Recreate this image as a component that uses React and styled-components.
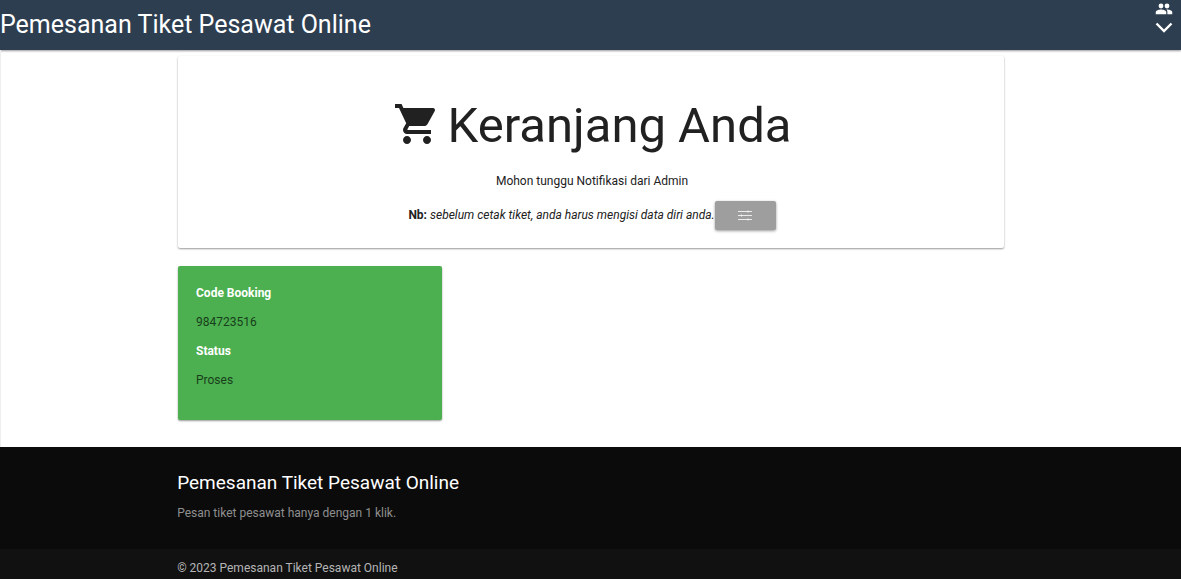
import React from "react";
import styled, { createGlobalStyle } from "styled-components";
import { MdShoppingCart } from "react-icons/md";

const GlobalStyle = createGlobalStyle`
  *, *::before, *::after { box-sizing: border-box; }
  body {
    margin: 0;
    background: #fff;
    color: #212121;
    font-family: Roboto, "Liberation Sans", sans-serif;
    font-size: 12px;
    line-height: 18px;
  }
`;

const Nav = styled.nav`
  display: flex;
  justify-content: space-between;
  align-items: flex-start;
  height: 50px;
  padding-right: 8px;
  background: #2d3e50;
  color: #fff;
  box-shadow: 0 1px 2px rgba(0, 0, 0, 0.4);
`;

const Brand = styled.a`
  color: inherit;
  font-size: 25px;
  line-height: 50px;
  text-decoration: none;
  white-space: nowrap;
`;

const AccountButton = styled.button`
  display: flex;
  flex-direction: column;
  align-items: center;
  gap: 4px;
  padding: 0;
  border: 0;
  background: none;
  color: inherit;
  cursor: pointer;
`;

const Container = styled.div`
  width: 70%;
  min-width: 300px;
  margin: 0 auto;
`;

const Main = styled.main`
  padding: 6px 0 27px;
  border-left: 1px solid #eee;
`;

const Panel = styled.section`
  border-radius: 2px;
  box-shadow: 0 1px 2px rgba(0, 0, 0, 0.4);
`;

const CartPanel = styled(Panel)`
  display: flex;
  flex-direction: column;
  align-items: center;
  padding: 40px 18px 18px 20px;
  margin-bottom: 18px;
`;

const Title = styled.h1`
  display: flex;
  align-items: center;
  gap: 7px;
  margin: 0 0 16px;
  font-size: 49px;
  font-weight: 400;
  line-height: 60px;
`;

const CartIcon = styled(MdShoppingCart)`
  width: 48px;
  height: 48px;
  margin-bottom: 5px;
`;

const Text = styled.p`
  margin: 0 0 11px;
`;

const Note = styled.div`
  display: flex;
  align-items: center;
`;

const NoteText = styled.p`
  margin: 0;
  padding-bottom: 2px;
`;

const FillButton = styled.button`
  display: flex;
  align-items: center;
  justify-content: center;
  width: 61px;
  height: 29px;
  padding: 0;
  border: 0;
  border-radius: 2px;
  background: #9e9e9e;
  color: #fff;
  box-shadow: 0 1px 3px rgba(0, 0, 0, 0.4);
  cursor: pointer;
`;

const BookingCard = styled(Panel)`
  width: 32%;
  min-width: 200px;
  padding: 18px 18px 20px;
  background: #4caf50;
`;

const Details = styled.dl`
  margin: 0;
`;

const Label = styled.dt`
  margin-bottom: 11px;
  color: #fff;
  font-weight: 700;
`;

const Value = styled.dd`
  margin: 0 0 11px;
  color: #17401a;
`;

const Footer = styled.footer`
  background: #0b0b0b;
`;

const FooterBody = styled.div`
  padding: 24px 0 27px;
`;

const FooterTitle = styled.h2`
  margin: 0 0 9px;
  color: #fff;
  font-size: 19px;
  font-weight: 400;
  line-height: 24px;
`;

const FooterText = styled.p`
  margin: 0;
  color: #8f8f8f;
`;

const Copyright = styled.div`
  padding: 10px 0 2px;
  background: #111;
  color: #b5b5b5;
`;

function PeopleIcon() {
  return (
    <svg width="18" height="18" viewBox="0 0 24 24" fill="currentColor" aria-hidden="true">
      <circle cx="8" cy="8" r="3.2" />
      <circle cx="16" cy="8" r="3.2" />
      <path d="M8 12.500c-2.330 0-7 1.170-7 3.500V19h14v-3c0-2.330-4.670-3.500-7-3.500z" />
      <path d="M16 12.500c-.29 0-.62.02-.97.050 1.160.840 1.470 1.970 1.470 3.450V19H23v-3c0-2.330-4.670-3.500-7-3.500z" />
    </svg>
  );
}

function ChevronIcon() {
  return (
    <svg width="18" height="12" viewBox="0 0 18 12" fill="none" stroke="currentColor" strokeWidth="2.4" aria-hidden="true">
      <path d="M1.500 1.500 9 9 16.500 1.500" />
    </svg>
  );
}

function AdjustIcon() {
  return (
    <svg width="14" height="12" viewBox="0 0 14 12" fill="none" stroke="currentColor" strokeWidth="0.8" aria-hidden="true">
      <path d="M0 1.500h14M0 5.500h14M0 9.500h14M10 0.500v2M3.500 4.500v2M10 8.500v2" />
    </svg>
  );
}

export default function App() {
  return (
    <>
      <GlobalStyle />
      <Nav>
        <Brand href="#">Pemesanan Tiket Pesawat Online</Brand>
        <AccountButton type="button" aria-label="Akun">
          <PeopleIcon />
          <ChevronIcon />
        </AccountButton>
      </Nav>
      <Main>
        <Container>
          <CartPanel>
            <Title>
              <CartIcon aria-hidden="true" />
              Keranjang Anda
            </Title>
            <Text>Mohon tunggu Notifikasi dari Admin</Text>
            <Note>
              <NoteText>
                <b>Nb:</b> <i>sebelum cetak tiket, anda harus mengisi data diri anda.</i>
              </NoteText>
              <FillButton type="button" aria-label="Isi data diri">
                <AdjustIcon />
              </FillButton>
            </Note>
          </CartPanel>
          <BookingCard>
            <Details>
              <Label>Code Booking</Label>
              <Value>984723516</Value>
              <Label>Status</Label>
              <Value>Proses</Value>
            </Details>
          </BookingCard>
        </Container>
      </Main>
      <Footer>
        <Container>
          <FooterBody>
            <FooterTitle>Pemesanan Tiket Pesawat Online</FooterTitle>
            <FooterText>Pesan tiket pesawat hanya dengan 1 klik.</FooterText>
          </FooterBody>
        </Container>
        <Copyright>
          <Container>© 2023 Pemesanan Tiket Pesawat Online</Container>
        </Copyright>
      </Footer>
    </>
  );
}
